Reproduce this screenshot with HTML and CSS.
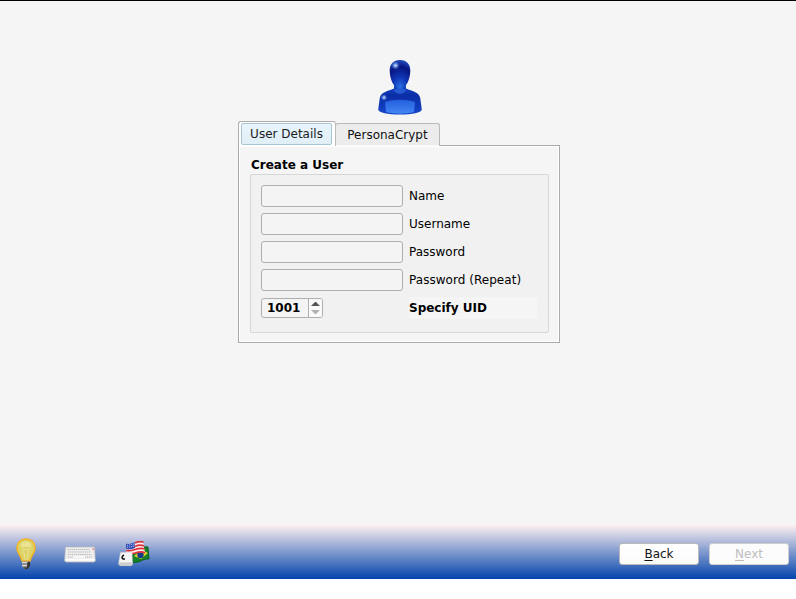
FILE: index.html
```html
<!DOCTYPE html>
<html lang="en">
<head>
<meta charset="utf-8">
<title>Create a User</title>
<link rel="stylesheet" href="styles.css">
</head>
<body>
<main class="page">
  <svg class="avatar" viewBox="0 0 46 56" aria-hidden="true">
    <defs>
      <radialGradient id="head" cx=".5" cy=".95" r=".9"><stop offset="0" stop-color="#2e70e6"/><stop offset=".4" stop-color="#0f35b4"/><stop offset=".8" stop-color="#08157f"/><stop offset="1" stop-color="#1d40b4"/></radialGradient>
      <linearGradient id="torso" x1="0" y1="0" x2="0" y2="1"><stop offset="0" stop-color="#1a4ccb"/><stop offset=".4" stop-color="#0b2da6"/><stop offset="1" stop-color="#1646cb"/></linearGradient>
      <linearGradient id="shine" x1="0" y1="0" x2="0" y2="1"><stop offset="0" stop-color="#235fdc"/><stop offset="1" stop-color="#4386f4"/></linearGradient>
      <radialGradient id="glint"><stop offset="0" stop-color="#e4f1ff"/><stop offset=".35" stop-color="#8fb4f0" stop-opacity=".8"/><stop offset="1" stop-color="#376ad5" stop-opacity="0"/></radialGradient>
    </defs>
    <path d="M17 24v5.500C11 32 4 33 2.800 39L1.200 50.500c1 3.500 9 5 21.800 5s20.800-1.500 21.800-5L43.200 39C42 33 35 32 29 29.500V24z" fill="url(#torso)"/>
    <path d="M8 43c9-3 21-3 30 0l-1 10c-8 2.200-20 2.200-28 0z" fill="url(#shine)"/>
    <path d="M17 31c1 5 11 5 12 0l-6-3z" fill="#2a63d8" opacity=".8"/>
    <path d="M23 1c6.500 0 10.500 4 10.300 11-.2 8-3.800 17.500-10.300 17.500S12.900 20 12.700 12C12.500 5 16.500 1 23 1z" fill="url(#head)"/>
    <circle cx="18.500" cy="6.500" r="4.500" fill="url(#glint)"/>
    <circle cx="7" cy="38.500" r="3.500" fill="url(#glint)"/>
  </svg>
  <section class="tabs">
    <nav class="tab-bar">
      <div class="tab tab-active"><span class="tab-face">User Details</span></div>
      <div class="tab tab-idle">PersonaCrypt</div>
    </nav>
    <div class="panel">
      <h1 class="title">Create a User</h1>
      <form class="group">
        <input class="field" id="name" type="text"><label for="name">Name</label>
        <input class="field" id="user" type="text"><label for="user">Username</label>
        <input class="field" id="pass" type="password"><label for="pass">Password</label>
        <input class="field" id="again" type="password"><label class="wide" for="again">Password (Repeat)</label>
        <div class="spin">
          <span class="spin-value">1001</span>
          <svg class="spin-arrows" viewBox="0 0 13 18"><path d="M2 7L6 3h1l4 4z" fill="#555"/><path d="M2 11h9l-4 4H6z" fill="#b0b0b0"/></svg>
        </div>
        <label class="uid">Specify UID</label>
      </form>
    </div>
  </section>
</main>
<footer class="bar">
  <svg class="bulb" viewBox="0 0 20 32" aria-hidden="true">
    <path d="M10 1C4.500 1 1 4.800 1 10c0 5.500 4 7 5 13h8c1-6 5-7.500 5-13 0-5.200-3.500-9-9-9z" fill="#dcd265" stroke="#f5b320" stroke-width="1.500"/>
    <path d="M5.500 5c2-2 7-2 9 0l1 4h-11z" fill="#f4edaa" opacity=".65"/>
    <path d="M5 10c3 2 7 2 10 0M7.500 12l1.500 10M12.500 12L11 22" fill="none" stroke="#eee5a0" stroke-width=".8"/>
    <path d="M6 23.500h8v5l-2.500 2.500h-3L6 28.500z" fill="#777"/>
    <path d="M6 24.500h6M6 27.500h5" stroke="#d8d8d8" stroke-width="1.300"/>
    <path d="M11.500 24H14v4l-2.500 3H9l-1-1.500h3z" fill="#333"/>
  </svg>
  <svg class="keyboard" viewBox="0 0 32 17" aria-hidden="true">
    <path d="M1.500 1h29l.8 13.500-.8 1.500H1.500L.7 14.500z" fill="#eee" stroke="#bbb" stroke-width=".8"/>
    <path d="M3.500 3.500h22M4 6h23M3.500 8.500h24M4 11h24" stroke="#b8b8b8" stroke-width="1.100" stroke-dasharray="1.300 .8"/>
    <path d="M9 11h12M1.500 13.700h29" stroke="#fff" stroke-width="1.500"/>
    <path d="M28.500 2.500h1.300v1.300h-1.300z" fill="#d44"/>
  </svg>
  <svg class="flags" viewBox="0 0 34 26" aria-hidden="true">
    <path d="M16 9c5 3 9-5 15-3l1 12c-6-1-10 5-17 3z" fill="#168126" stroke="#07570f" stroke-width=".8"/>
    <path d="M17 15l8-6 6 3-7 6z" fill="#e3d52c"/><circle cx="23.500" cy="14" r="3.200" fill="#183c88"/>
    <path d="M9 2.500c6 2 11-4 17-1.500L28 12c-7-3-11 3-19 1z" fill="#f8f0f0"/>
    <path d="M18 2c3-1.500 5.500-2 8.500-.8M18 5.500c3-1.500 6-2 9-.5M9 9.500c7 2 12-4.500 18.500-1.500M9 12.700c7 2 12-4 19-1" fill="none" stroke="#e0303a" stroke-width="1.700"/>
    <path d="M9 2.500c3 1 6 0 8.500-1.500l.5 6c-3 1.500-6 2-9 1z" fill="#3550b5"/>
    <path d="M10 4.500L17 3M10 6.500L17 5" stroke="#d9e2ff" stroke-width=".8" stroke-dasharray="1 1"/>
    <path d="M3.500 11.500l11.500-.5.500 12L14 24.500H3L1.500 23z" fill="#f5f5f5" stroke="#ccc" stroke-width=".6"/>
    <path d="M2 21.500l13.500-.3v2.500l-1 1H3l-1-1z" fill="#ccc"/>
    <path d="M7 14c-2 1-3 3.500-.5 4h1.500" fill="none" stroke="#111" stroke-width="1.500"/>
  </svg>
  <button class="btn btn-back" type="button"><u>B</u>ack</button>
  <button class="btn" type="button" disabled><u>N</u>ext</button>
</footer>
</body>
</html>
```
FILE: styles.css
```css
* { box-sizing: border-box; }
html, body { margin: 0; height: 100%; background: #fff; overflow: hidden; }
body { font: 12px/14px "DejaVu Sans", sans-serif; color: #000; }
.page {
  height: 525px;
  padding-top: 58px;
  border-top: 1px solid #000;
  background: #f5f5f5;
  display: flex;
  flex-direction: column;
  align-items: center;
}
.avatar { width: 46px; height: 56px; margin-left: 4px; flex: none; }
.tabs { width: 322px; margin: 6px 0 0 2px; }
.tab-bar { position: relative; z-index: 1; display: flex; align-items: flex-end; height: 25px; }
.tab { border: 1px solid #aeaeae; border-bottom: 0; border-radius: 3px 3px 0 0; }
.tab-active {
  position: relative;
  z-index: 1;
  width: 98px;
  height: 25px;
  padding: 1px 3px 1px 2px;
  background: #fff;
  border-right-color: #bbb;
}
.tab-face {
  display: block;
  height: 22px;
  border: 1px solid #a9c4d2;
  border-radius: 2px;
  background: linear-gradient(#e8f5fd, #e0eef6);
  line-height: 21px;
  text-align: center;
  color: #1b2023;
}
.tab-idle {
  width: 105px;
  height: 23px;
  margin-left: -1px;
  border-color: #b9b9b9;
  background: #ececec;
  box-shadow: inset 0 -1px #f8f8f8;
  line-height: 23px;
  text-align: center;
  color: #111;
}
.panel {
  height: 198px;
  margin-top: -1px;
  padding: 12px 10px 9px 11px;
  border: 1px solid #aaa;
  background: #f5f5f5;
  box-shadow: inset 1px 1px #fff, inset -1px -1px #fff;
}
.title { margin: 0 0 2px 1px; height: 14px; font-size: 12px; line-height: 14px; }
.group {
  height: 159px;
  margin: 0;
  padding: 10px 11px 0 10px;
  border: 1px solid #d7d7d7;
  border-radius: 2px;
  background: #f1f1f1;
  display: grid;
  grid-template-columns: 142px 128px;
  grid-auto-rows: 22px;
  gap: 6px;
  align-items: center;
}
.field {
  width: 142px;
  height: 22px;
  margin: 0;
  padding: 0 4px;
  border: 1px solid #aeaeae;
  border-radius: 3px;
  background: #f4f4f4;
  outline: 0;
}
.wide { letter-spacing: .04px; }
.spin {
  width: 62px;
  height: 20px;
  display: flex;
  border: 1px solid #aeaeae;
  border-radius: 3px;
  background: #f4f4f4;
  font-weight: bold;
}
.spin-value { width: 47px; padding-left: 5px; border-right: 1px solid #aeaeae; line-height: 18px; }
.spin-arrows { width: 13px; height: 18px; border-radius: 0 2px 2px 0; background: #fafafa; }
.uid { height: 22px; background: #f5f5f5; font-weight: bold; line-height: 22px; }
.bar {
  height: 54px;
  padding: 3px 7px 0 16px;
  background: linear-gradient(#fdf0f0, #0243ac);
  display: flex;
  align-items: center;
}
.bulb { width: 20px; height: 32px; margin-top: 1px; }
.keyboard { width: 32px; height: 17px; margin: 2px 0 0 28px; }
.flags { width: 34px; height: 26px; margin-left: 21px; }
.btn {
  width: 80px;
  height: 22px;
  margin: 0 0 0 10px;
  padding: 0;
  border: 1px solid #b9b9b9;
  border-radius: 3px;
  background: linear-gradient(#fff, #fbfbfb);
  font: inherit;
  color: #111;
}
.btn:disabled { border-color: #cfcfcf; background: #fcfcfc; color: #bebebe; }
.btn-back { margin-left: auto; }
.btn u { text-underline-offset: 2px; text-decoration-thickness: 1px; }
```
